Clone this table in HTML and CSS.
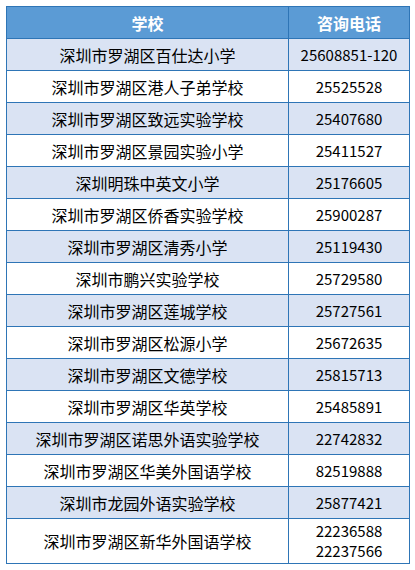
FILE: index.html
```html
<!DOCTYPE html>
<html lang="zh">
<head>
<meta charset="utf-8">
<link rel="stylesheet" href="styles.css">
</head>
<body>
<table class="schools">
<colgroup><col class="c-name"><col class="c-tel"></colgroup>
<thead>
<tr><th>学校</th><th>咨询电话</th></tr>
</thead>
<tbody>
<tr class="alt"><td>深圳市罗湖区百仕达小学</td><td>25608851-120</td></tr>
<tr><td>深圳市罗湖区港人子弟学校</td><td>25525528</td></tr>
<tr class="alt"><td>深圳市罗湖区致远实验学校</td><td>25407680</td></tr>
<tr><td>深圳市罗湖区景园实验小学</td><td>25411527</td></tr>
<tr class="alt"><td>深圳明珠中英文小学</td><td>25176605</td></tr>
<tr><td>深圳市罗湖区侨香实验学校</td><td>25900287</td></tr>
<tr class="alt"><td>深圳市罗湖区清秀小学</td><td>25119430</td></tr>
<tr><td>深圳市鹏兴实验学校</td><td>25729580</td></tr>
<tr class="alt"><td>深圳市罗湖区莲城学校</td><td>25727561</td></tr>
<tr><td>深圳市罗湖区松源小学</td><td>25672635</td></tr>
<tr class="alt"><td>深圳市罗湖区文德学校</td><td>25815713</td></tr>
<tr><td>深圳市罗湖区华英学校</td><td>25485891</td></tr>
<tr class="alt"><td>深圳市罗湖区诺思外语实验学校</td><td>22742832</td></tr>
<tr><td>深圳市罗湖区华美外国语学校</td><td>82519888</td></tr>
<tr class="alt"><td>深圳市龙园外语实验学校</td><td>25877421</td></tr>
<tr class="tall"><td>深圳市罗湖区新华外国语学校</td><td>22236588<br>22237566</td></tr>
</tbody>
</table>
</body>
</html>
```
FILE: styles.css
```css
html, body {
  margin: 0;
  padding: 0;
  background: #ffffff;
}
body {
  padding: 6px 0 0 6px;
  font-family: "Noto Sans CJK SC", "Noto Sans", sans-serif;
  color: #000000;
}
.schools {
  border-collapse: collapse;
  table-layout: fixed;
  width: 403px;
}
.c-name { width: 282px; }
.c-tel { width: 121px; }
.schools th,
.schools td {
  border: 1px solid #2e75b6;
  padding: 0;
  text-align: center;
  vertical-align: middle;
  height: 31px;
  font-size: 16px;
  line-height: 20px;
  font-weight: normal;
}
.schools th {
  background: #5b9bd5;
  color: #ffffff;
  font-weight: bold;
}
.schools td:last-child {
  font-size: 15px;
}
.schools tr.alt td {
  background: #dae3f3;
}
.schools tr.tall td {
  height: 44px;
}
```
